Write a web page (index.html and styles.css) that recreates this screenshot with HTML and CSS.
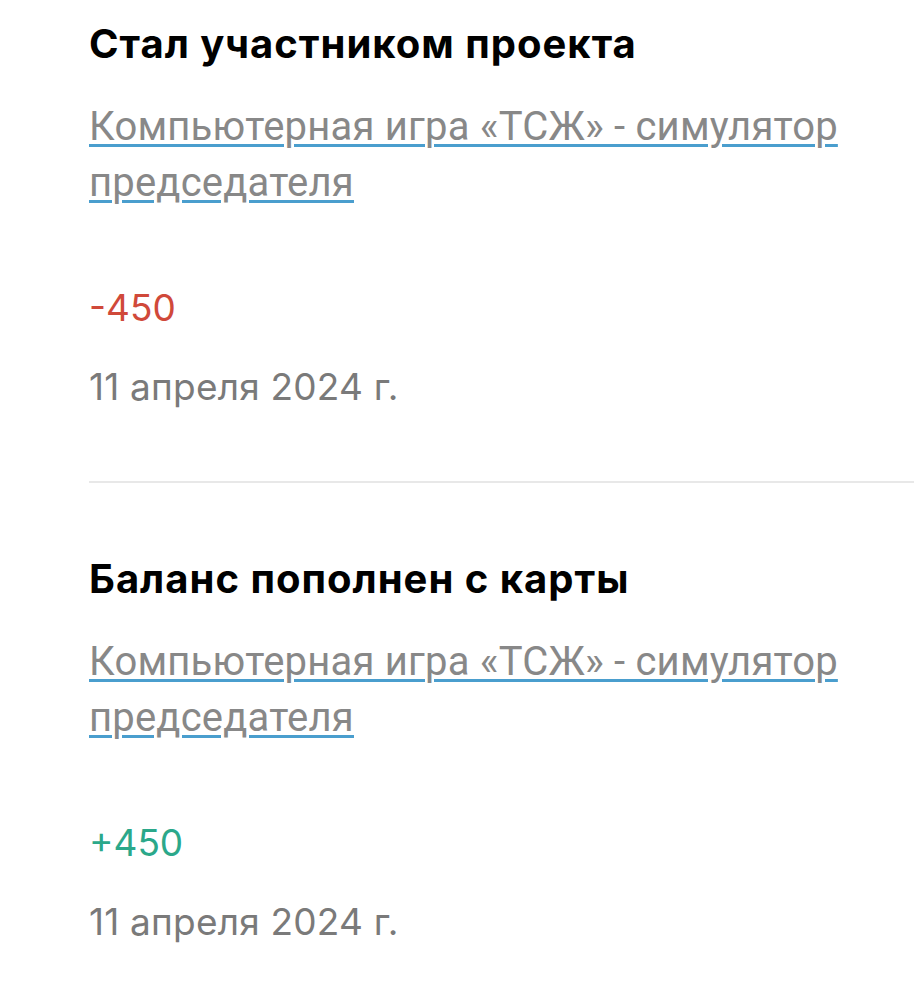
FILE: index.html
```html
<!DOCTYPE html>
<html>

<head>
    <meta charset="UTF-8">
    <meta name="viewport" content="width=device-width, initial-scale=1.0">
    <title>Операции</title>
    <link rel="stylesheet" href="styles.css">
</head>

<body>
    <div class="history">
        <div class="history__item">
            <h2 class="history__title">Стал участником проекта</h2>
            <a href="#" class="history__link">Компьютерная игра «ТСЖ» - симулятор председателя</a>
            <div class="history__amount history__amount--minus">-450</div>
            <div class="history__date">11 апреля 2024 г.</div>
        </div>
        <div class="history__item">
            <h2 class="history__title">Баланс пополнен с карты</h2>
            <a href="#" class="history__link">Компьютерная игра «ТСЖ» - симулятор председателя</a>
            <div class="history__amount history__amount--plus">+450</div>
            <div class="history__date">11 апреля 2024 г.</div>
        </div>
    </div>
</body>

</html>
```

FILE: styles.css
```css
*,
*::before,
*::after {
    box-sizing: border-box;
    margin: 0;
    padding: 0;
}

body {
    font-family: Inter, Roboto, sans-serif;
    font-size: 37px;
    line-height: 56px;
    background-color: white;
    color: black;
}

.history {
    padding-left: 89px;
}

.history__item {
    padding: 16px 0 66px;
    border-bottom: 2px solid rgb(232, 232, 232);
}

.history__item + .history__item {
    padding-top: 68px;
    border-bottom: none;
}

.history__title {
    font-size: 40px;
    font-weight: 700;
    letter-spacing: 1px;
    line-height: 56px;
    margin-bottom: 27px;
}

.history__link {
    display: block;
    width: 780px;
    font-family: Roboto, sans-serif;
    font-size: 40px;
    letter-spacing: 0.2px;
    color: rgb(136, 136, 136);
    text-decoration: underline;
    text-decoration-color: rgb(74, 158, 206);
    text-decoration-thickness: 3px;
    text-underline-offset: 4px;
    margin-bottom: 69px;
}

.history__amount {
    margin-bottom: 23px;
}

.history__amount--minus {
    color: rgb(208, 73, 58);
}

.history__amount--plus {
    color: rgb(43, 168, 138);
}

.history__date {
    letter-spacing: 0.2px;
    color: rgb(122, 122, 122);
}
```
